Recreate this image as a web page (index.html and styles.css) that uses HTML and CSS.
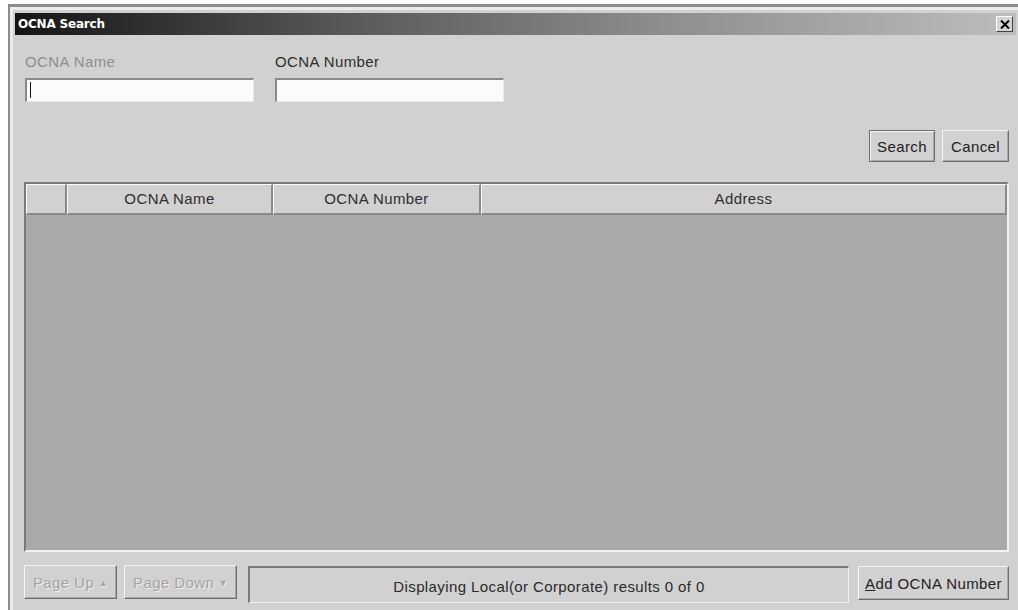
FILE: index.html
```html
<!DOCTYPE html>
<html>
<head>
<meta charset="utf-8">
<title>OCNA Search</title>
<link rel="stylesheet" href="styles.css">
</head>
<body>
<div class="window">
  <div class="titlebar">
    <span class="title">OCNA Search</span>
    <button class="close" type="button" aria-label="Close">
      <svg width="10" height="9" viewBox="0 0 10 9"><path d="M1 0.5 L9 8.5 M9 0.5 L1 8.5" stroke="#000" stroke-width="2"/></svg>
    </button>
  </div>
  <div class="content">
    <div class="fields">
      <div class="field">
        <label class="label disabled">OCNA Name</label>
        <div class="input"><span class="caret"></span></div>
      </div>
      <div class="field">
        <label class="label">OCNA Number</label>
        <div class="input"></div>
      </div>
    </div>
    <div class="actions">
      <button class="btn btn-search" type="button">Search</button>
      <button class="btn btn-cancel" type="button">Cancel</button>
    </div>
    <div class="table">
      <div class="thead">
        <div class="th th-sel"></div>
        <div class="th th-name">OCNA Name</div>
        <div class="th th-num">OCNA Number</div>
        <div class="th th-addr">Address</div>
      </div>
      <div class="tbody"></div>
    </div>
    <div class="footer">
      <button class="btn btn-page disabled" type="button">Page Up <span class="arrow">&#9650;</span></button>
      <button class="btn btn-page btn-down disabled" type="button">Page Down <span class="arrow">&#9660;</span></button>
      <div class="status">Displaying Local(or Corporate) results 0 of 0</div>
      <button class="btn btn-add" type="button"><u>A</u>dd OCNA Number</button>
    </div>
  </div>
</div>
</body>
</html>
```

FILE: styles.css
```css
html, body {
  margin: 0;
  padding: 0;
  width: 1018px;
  height: 610px;
  overflow: hidden;
  background: #ffffff;
}

body {
  font-family: "Liberation Sans", Arial, sans-serif;
  font-size: 15px;
  letter-spacing: 0.4px;
  color: #2a2a2a;
}

.window {
  box-sizing: border-box;
  margin: 4px 0 0 8px;
  width: 1010px;
  height: 606px;
  background: #d1d1d1;
  border-top: 3px solid #8c8c8c;
  border-left: 2px solid #8c8c8c;
  box-shadow: inset 3px 3px 0 #ececec;
  padding: 6px 0 0 5px;
  display: flex;
  flex-direction: column;
}

.titlebar {
  height: 22px;
  flex: none;
  margin-right: 2px;
  background: linear-gradient(to right, #151515 0%, #5c5c5c 35%, #8e8e8e 65%, #bdbdbd 100%);
  display: flex;
  align-items: center;
  justify-content: space-between;
  padding: 0 3px 0 3px;
}

.title {
  color: #ffffff;
  font-family: "DejaVu Sans", Verdana, sans-serif;
  font-weight: bold;
  font-size: 12px;
  letter-spacing: -0.2px;
}

.close {
  width: 17px;
  height: 16px;
  padding: 0;
  margin: 0;
  background: #d4d4d4;
  border: 1px solid;
  border-color: #ffffff #444444 #444444 #ffffff;
  display: flex;
  align-items: center;
  justify-content: center;
}

.content {
  flex: 1;
  display: flex;
  flex-direction: column;
  padding: 0 9px 0 9px;
}

.fields {
  display: flex;
  gap: 21px;
  margin-top: 18px;
  padding-left: 1px;
}

.field {
  width: 229px;
  display: flex;
  flex-direction: column;
  gap: 7px;
}

.label {
  line-height: 18px;
  color: #2e2e2e;
}

.label.disabled {
  color: #8e8e8e;
}

.input {
  box-sizing: border-box;
  height: 24px;
  background: #fbfbfb;
  border-style: solid;
  border-width: 2px 1px 1px 2px;
  border-color: #8a8a8a #e8e8e8 #e8e8e8 #8a8a8a;
  padding: 2px 3px;
}

.caret {
  display: block;
  width: 1px;
  height: 16px;
  background: #111111;
}

.actions {
  display: flex;
  justify-content: flex-end;
  gap: 7px;
  margin-top: 28px;
}

.btn {
  box-sizing: border-box;
  font-family: "Liberation Sans", Arial, sans-serif;
  font-size: 15px;
  letter-spacing: 0.4px;
  color: #222222;
  background: #d1d1d1;
  border: 1px solid;
  border-color: #f4f4f4 #6e6e6e #6e6e6e #f4f4f4;
  box-shadow: inset -1px -1px 0 #a8a8a8;
  padding: 0;
  margin: 0;
}

.btn-search {
  width: 66px;
  height: 32px;
  border-color: #6e6e6e;
  box-shadow: inset 1px 1px 0 #f4f4f4, inset -1px -1px 0 #a8a8a8;
}

.btn-cancel {
  width: 67px;
  height: 32px;
}

.table {
  flex: 1;
  display: flex;
  flex-direction: column;
  margin-top: 20px;
  border-style: solid;
  border-width: 2px;
  border-color: #7a7a7a #f2f2f2 #f2f2f2 #7a7a7a;
}

.thead {
  display: flex;
  height: 31px;
  flex: none;
  background: #d1d1d1;
}

.th {
  box-sizing: border-box;
  height: 31px;
  line-height: 28px;
  text-align: center;
  color: #2e2e2e;
  border-style: solid;
  border-width: 1px 2px 2px 1px;
  border-color: #fbfbfb #8a8a8a #8a8a8a #fbfbfb;
}

.th-sel { width: 41px; }
.th-name { width: 206px; }
.th-num { width: 208px; }
.th-addr { flex: 1; }

.tbody {
  flex: 1;
  background: #a9a9a9;
}

.footer {
  display: flex;
  align-items: flex-start;
  margin-top: 13px;
  margin-bottom: 7px;
  height: 38px;
}

.btn-page {
  height: 34px;
  width: 93px;
  color: #a4a4a4;
  text-shadow: 1px 1px 0 #efefef;
  margin-right: 7px;
}

.btn-down {
  width: 113px;
  margin-right: 11px;
}

.arrow {
  font-size: 9px;
  position: relative;
  top: -2px;
}

.status {
  box-sizing: border-box;
  flex: 1;
  height: 37px;
  margin-top: 1px;
  border-style: solid;
  border-width: 2px 1px 1px 2px;
  border-color: #7a7a7a #f2f2f2 #f2f2f2 #7a7a7a;
  text-align: center;
  line-height: 38px;
  color: #2a2a2a;
  margin-right: 9px;
}

.btn-add {
  width: 151px;
  height: 34px;
  margin-top: 1px;
}

.btn-add u {
  text-decoration: underline;
}
```
